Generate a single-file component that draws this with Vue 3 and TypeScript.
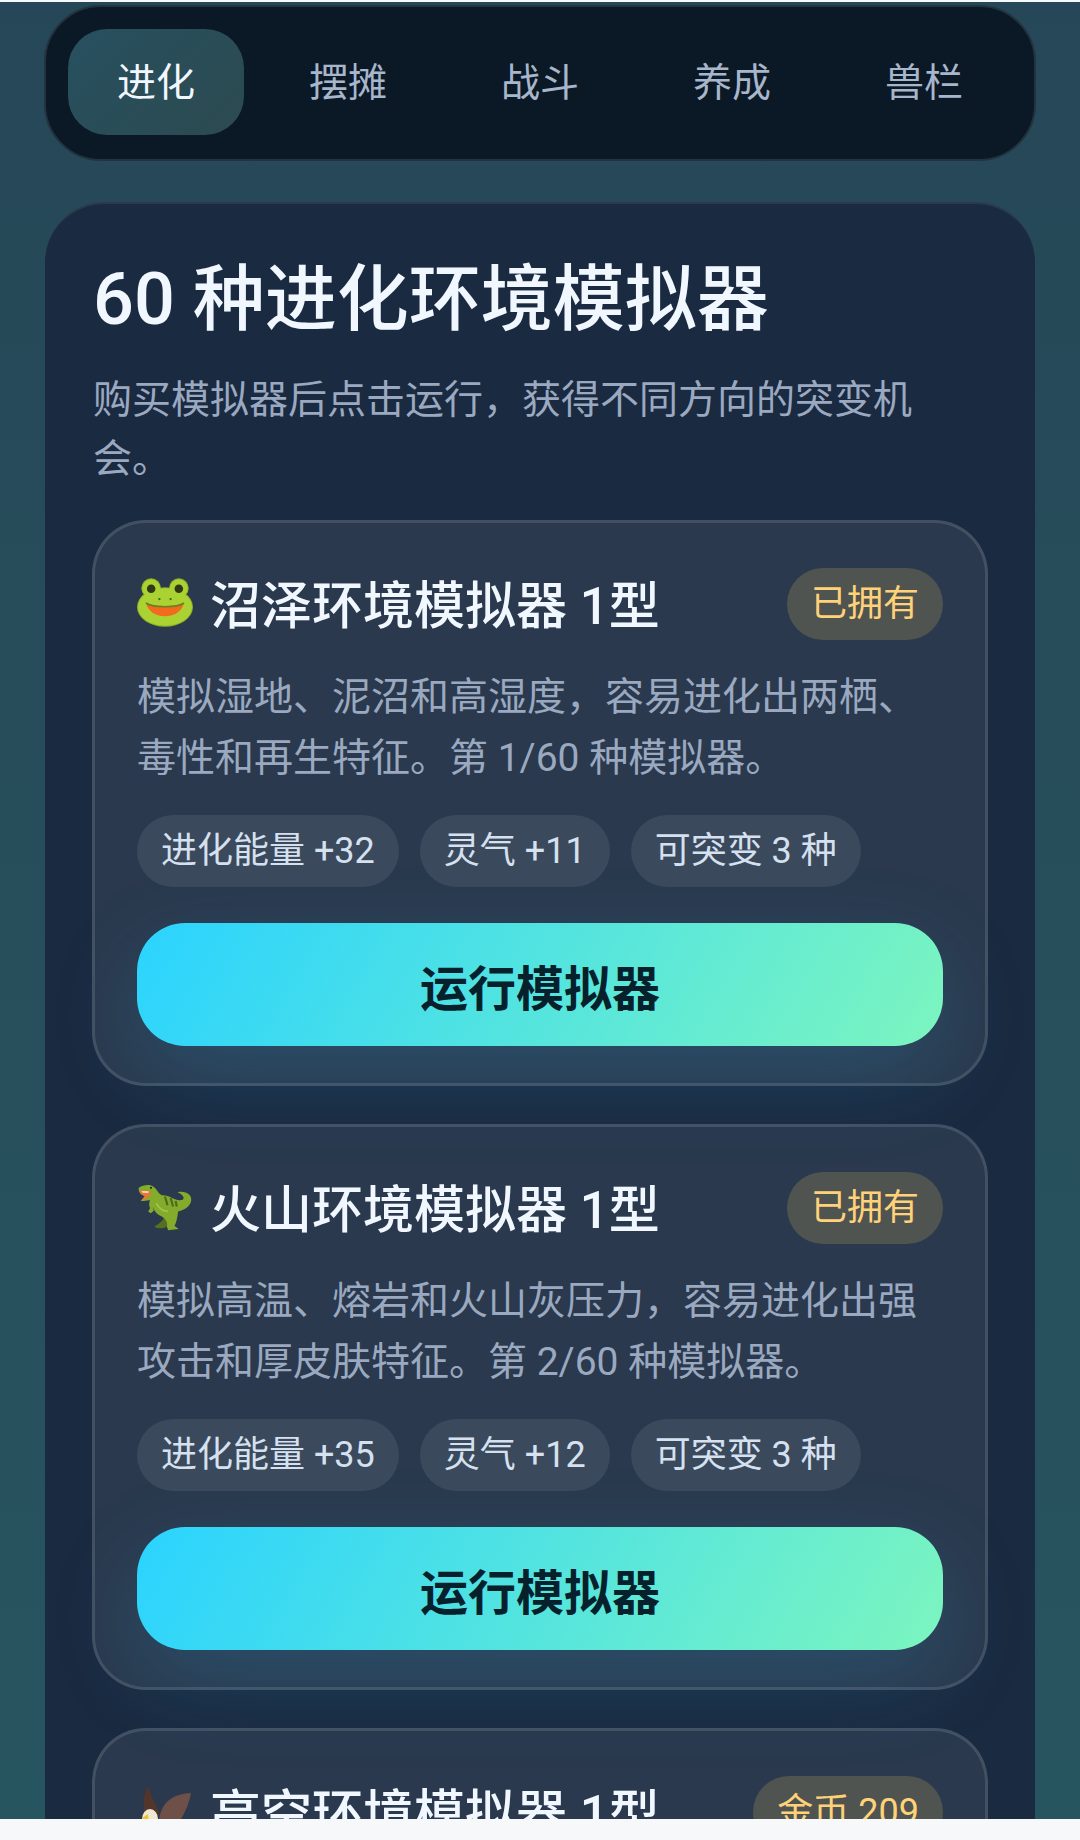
<script setup lang="ts">
const tabs = ['进化', '摆摊', '战斗', '养成', '兽栏']

const simulators = [
  {
    icon: 'frog',
    name: '沼泽环境模拟器 1型',
    badge: '已拥有',
    desc: '模拟湿地、泥沼和高湿度，容易进化出两栖、毒性和再生特征。第 1/60 种模拟器。',
    chips: ['进化能量 +32', '灵气 +11', '可突变 3 种'],
  },
  {
    icon: 'rex',
    name: '火山环境模拟器 1型',
    badge: '已拥有',
    desc: '模拟高温、熔岩和火山灰压力，容易进化出强攻击和厚皮肤特征。第 2/60 种模拟器。',
    chips: ['进化能量 +35', '灵气 +12', '可突变 3 种'],
  },
  {
    icon: 'eagle',
    name: '高空环境模拟器 1型',
    badge: '金币 209',
    desc: '模拟低氧、强风和稀薄大气，容易进化出飞行和敏捷特征。第 3/60 种模拟器。',
    chips: ['进化能量 +38', '灵气 +13', '可突变 3 种'],
  },
]
</script>

<template>
  <div class="screen">
    <nav class="tabs">
      <div v-for="(tab, i) in tabs" :key="tab" class="tab" :class="{ active: i === 0 }">{{ tab }}</div>
    </nav>

    <section class="panel">
      <h1 class="title">60 种进化环境模拟器</h1>
      <p class="intro">购买模拟器后点击运行，获得不同方向的突变机会。</p>

      <article v-for="sim in simulators" :key="sim.name" class="card">
        <header class="card-head">
          <h2 class="card-title">
            <svg v-if="sim.icon === 'frog'" class="icon" viewBox="35 38 170 147">
              <circle cx="78" cy="68" r="30" fill="#8fb022" />
              <circle cx="162" cy="68" r="30" fill="#8fb022" />
              <ellipse cx="120" cy="125" rx="85" ry="60" fill="#8fb022" />
              <circle cx="78" cy="68" r="27" fill="#aad232" />
              <circle cx="162" cy="68" r="27" fill="#aad232" />
              <ellipse cx="120" cy="125" rx="82" ry="57" fill="#aad232" />
              <circle cx="78" cy="70" r="13" fill="#2f3a14" />
              <circle cx="162" cy="70" r="13" fill="#2f3a14" />
              <circle cx="103" cy="101" r="3.5" fill="#4a5a1a" />
              <circle cx="137" cy="101" r="3.5" fill="#4a5a1a" />
              <path d="M62 113 C85 128 155 128 178 113 C170 142 145 153 120 153 C95 153 70 142 62 113Z" fill="#f26a1b" />
              <path d="M62 113 C85 128 155 128 178 113" fill="none" stroke="#6c7f22" stroke-width="5" />
            </svg>
            <svg v-else-if="sim.icon === 'rex'" class="icon" viewBox="60 75 180 150">
              <path d="M148 180 C146 195 132 205 116 214 C122 222 145 222 154 216 C162 205 168 195 170 182Z" fill="#566e1f" />
              <path d="M66 90 C80 80 102 78 114 87 C126 96 128 108 140 114 C162 112 184 132 198 130 C216 130 214 114 190 104 C214 98 238 110 234 132 C230 152 208 162 192 166 C190 186 186 204 180 212 L194 222 L160 226 L156 214 C160 202 152 190 140 182 C126 178 116 168 112 152 L114 164 L104 172 L96 166 L102 156 C98 146 98 138 102 130 C94 128 82 134 72 132 C78 124 84 120 92 118 L72 110 C66 104 64 96 66 90Z" fill="#84ab2c" />
              <path d="M70 98 L100 100 L106 110 L94 122 L74 130 L84 118 L72 110Z" fill="#e9753a" />
              <path d="M74 100 L98 101 L96 107 L78 106Z" fill="#f8ddc0" />
              <path d="M150 118 L158 146 M168 122 L176 150 M184 132 L188 150" stroke="#4e6a1c" stroke-width="7" fill="none" />
              <path d="M122 140 C130 155 145 165 160 165" stroke="#a6c550" stroke-width="5" fill="none" />
              <circle cx="105" cy="90" r="3.5" fill="#233010" />
            </svg>
            <svg v-else class="icon" viewBox="0 0 56 49">
              <path d="M8 30 C5 18 7 8 11 0 C13 8 18 16 22 26 L18 42Z" fill="#54352b" />
              <path d="M22 34 C24 18 34 8 54 7 C52 20 44 36 34 46 L22 46Z" fill="#6e5048" />
              <ellipse cx="13" cy="33" rx="8" ry="10" fill="#f0e8d0" />
              <path d="M5 32 L11 28 L12 38 L7 40Z" fill="#f2c230" />
            </svg>
            <span>{{ sim.name }}</span>
          </h2>
          <span class="badge">{{ sim.badge }}</span>
        </header>
        <p class="card-desc">{{ sim.desc }}</p>
        <div class="chips">
          <span v-for="chip in sim.chips" :key="chip" class="chip">{{ chip }}</span>
        </div>
        <button class="run">运行模拟器</button>
      </article>
    </section>
  </div>
</template>

<style>
html,
body {
  margin: 0;
  background: #f6f8fa;
}
</style>

<style scoped>
.screen {
  box-sizing: border-box;
  height: 1817px;
  margin-top: 2px;
  padding: 3px 44px 0;
  overflow: hidden;
  background: linear-gradient(180deg, #264757, #27555f);
  font-family: Roboto, "Noto Sans CJK SC", sans-serif;
}

.tabs {
  display: grid;
  grid-template-columns: repeat(5, 1fr);
  gap: 16px;
  padding: 22px 22px 24px;
  background: #0b1926;
  border: 2px solid #22333f;
  border-radius: 57px;
}

.tab {
  height: 106px;
  line-height: 108px;
  text-align: center;
  font-size: 39px;
  color: #a8b6cb;
  border-radius: 39px;
}

.tab.active {
  color: #f1f7ff;
  background: linear-gradient(135deg, #27505f, #2c4a50);
}

.panel {
  margin: 41px 1px 0;
  padding: 46px 47px 0;
  background: #1a2a40;
  border-top: 2px solid #2a3a4c;
  border-radius: 60px 60px 0 0;
}

.title {
  margin: 0 0 0 1px;
  font-size: 72px;
  line-height: 100px;
  font-weight: 500;
  color: #f1f7ff;
}

.intro {
  margin: 21px 0 0 1px;
  font-size: 39px;
  line-height: 58.5px;
  color: #9aa9c0;
}

.card {
  box-sizing: border-box;
  height: 566px;
  margin-top: 38px;
  padding: 42px;
  background: rgba(255, 255, 255, 0.07);
  border: 3px solid rgba(255, 255, 255, 0.12);
  border-radius: 54px;
}

.intro + .card {
  margin-top: 32px;
}

.card-head {
  display: flex;
  justify-content: space-between;
  align-items: center;
}

.card-title {
  display: flex;
  align-items: center;
  gap: 17px;
  margin: 0;
  padding-bottom: 3px;
  font-size: 51px;
  font-weight: 500;
  color: #f1f7ff;
}

.icon {
  width: 56px;
  height: 49px;
  flex: none;
}

.badge {
  box-sizing: border-box;
  height: 72px;
  line-height: 72px;
  padding: 0 24px;
  font-size: 36px;
  color: #ffd27a;
  background: #4f5450;
  border-radius: 36px;
}

.card-desc {
  margin: 25px 0 0;
  font-size: 39px;
  line-height: 60.5px;
  color: #9aa9c0;
}

.chips {
  display: flex;
  gap: 21px;
  margin-top: 27px;
}

.chip {
  height: 72px;
  line-height: 72px;
  padding: 0 24px;
  font-size: 36px;
  color: #d6e1f0;
  background: #3b495d;
  border-radius: 36px;
}

.run {
  display: block;
  width: 100%;
  height: 123px;
  margin-top: 36px;
  padding: 0;
  border: 0;
  border-radius: 48px;
  font-family: inherit;
  font-size: 48px;
  font-weight: 700;
  color: #06212b;
  background: linear-gradient(120deg, #2bd3ff, #7cf5bf);
  box-shadow: 0 30px 90px rgba(45, 190, 255, 0.17);
}
</style>
